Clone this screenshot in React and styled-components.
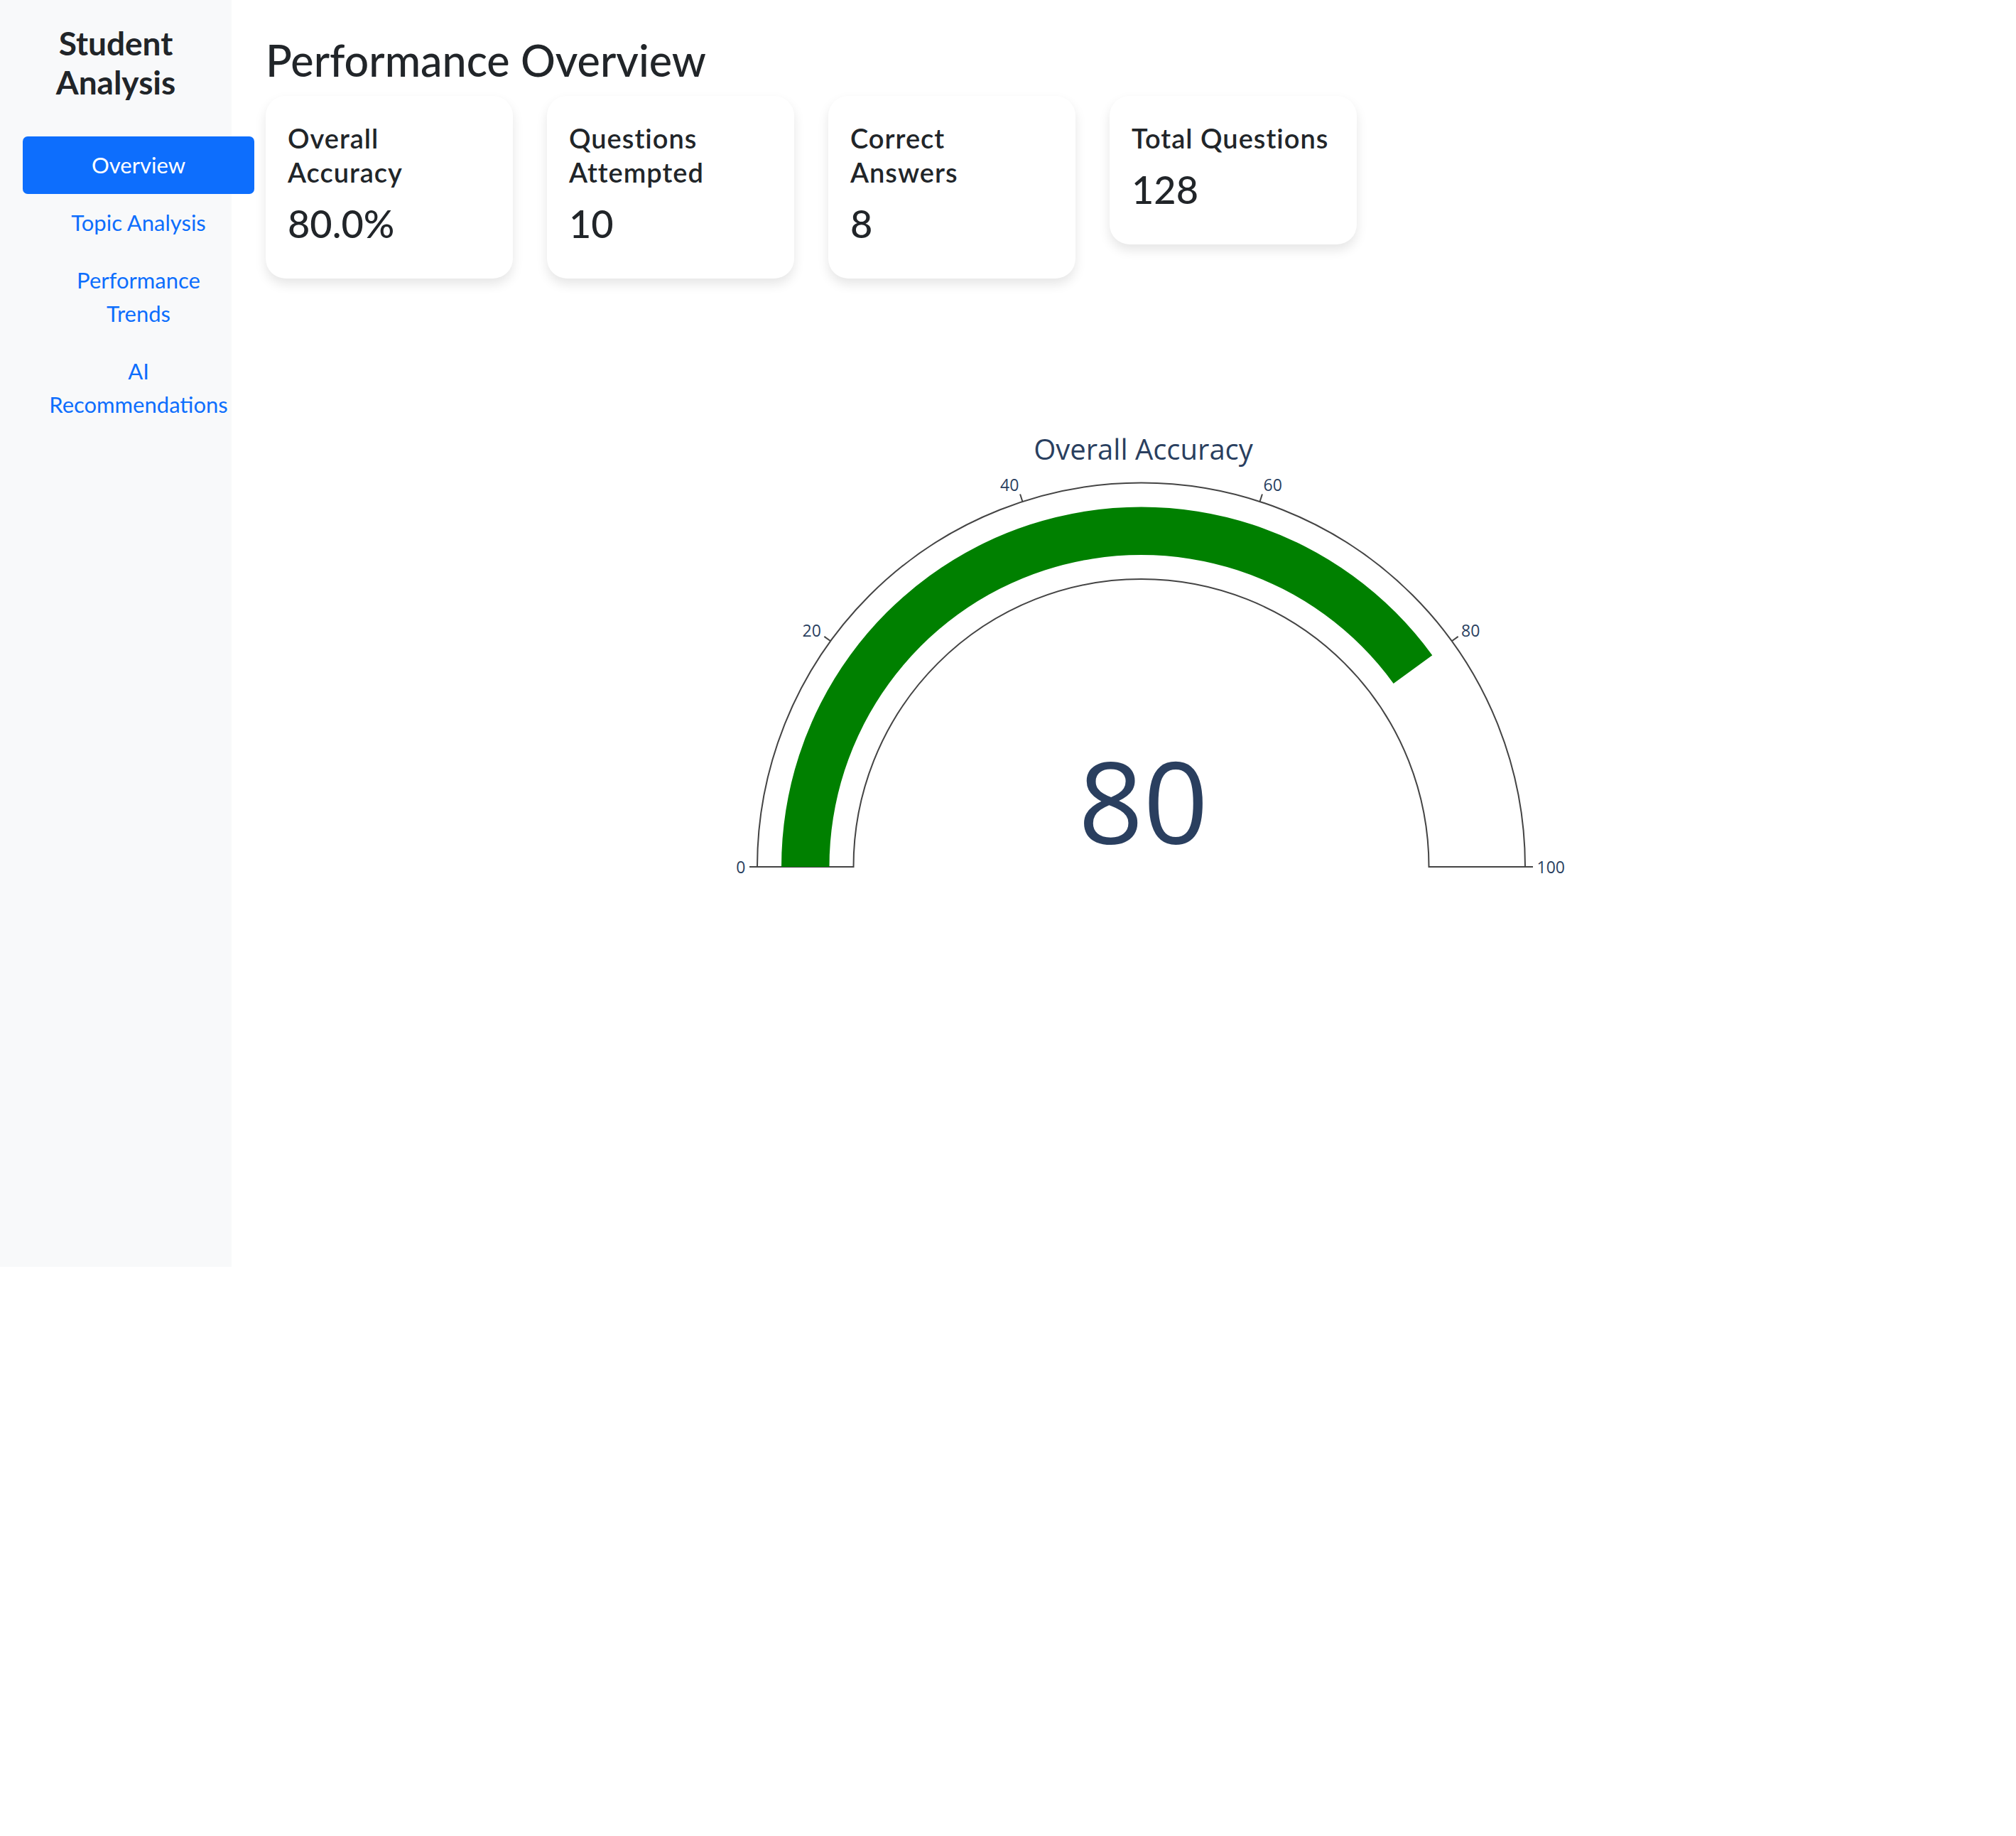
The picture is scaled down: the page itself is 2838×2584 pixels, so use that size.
import React from "react";
import styled, { createGlobalStyle } from "styled-components";

const GlobalStyle = createGlobalStyle`
  *, *::before, *::after { box-sizing: border-box; }
  html, body { margin: 0; padding: 0; background: #ffffff; }
  body {
    font-family: Lato, "Noto Sans", "Liberation Sans", sans-serif;
    color: #212529;
  }
`;

const Layout = styled.div`
  display: flex;
  align-items: flex-start;
  width: 2838px;
`;

const Sidebar = styled.aside`
  flex: 0 0 326px;
  width: 326px;
  height: 1783px;
  background: #f8f9fa;
  padding-top: 33px;
`;

const Brand = styled.h4`
  margin: 0;
  font-size: 46px;
  line-height: 55px;
  font-weight: 700;
  text-align: center;
  color: #212529;
`;

const NavList = styled.ul`
  list-style: none;
  margin: 49px 0 0 32px;
  padding: 0;
  width: 326px;
  display: flex;
  flex-direction: column;
`;

const NavLink = styled.a`
  display: block;
  padding: 17px 31px;
  font-size: 31px;
  line-height: 47px;
  text-align: center;
  border-radius: 7px;
  text-decoration: none;
  color: ${(p) => (p.$active ? "#ffffff" : "#0d6efd")};
  background: ${(p) => (p.$active ? "#0d6efd" : "transparent")};
`;

const Main = styled.main`
  flex: 1;
  padding: 48px 0 0 48px;
`;

const PageTitle = styled.h2`
  margin: 0 0 13px;
  font-size: 61px;
  line-height: 74px;
  font-weight: 500;
  color: #212529;
`;

const CardRow = styled.div`
  display: flex;
  align-items: flex-start;
  gap: 48px;
`;

const Card = styled.div`
  width: 348px;
  background: #ffffff;
  border-radius: 28px;
  padding: 35px 31px 30px;
  box-shadow: 0 8px 16px rgba(0, 0, 0, 0.1);
`;

const CardTitle = styled.h5`
  margin: 0 0 16px;
  font-size: 38px;
  line-height: 48px;
  font-weight: 600;
  letter-spacing: 1px;
  color: #212529;
`;

const CardValue = styled.h3`
  margin: 0 0 15px;
  font-size: 54px;
  line-height: 65px;
  font-weight: 500;
  color: #212529;
`;

const ChartWrap = styled.div`
  margin-top: 8px;
  width: 2464px;
  height: 900px;
`;

const ChartSvg = styled.svg`
  display: block;
  font-family: "Open Sans", "Noto Sans", sans-serif;
`;

const stats = [
  { title: "Overall Accuracy", value: "80.0%" },
  { title: "Questions Attempted", value: "10" },
  { title: "Correct Answers", value: "8" },
  { title: "Total Questions", value: "128" },
];

const navItems = [
  { label: "Overview", active: true },
  { label: "Topic Analysis" },
  { label: "Performance Trends" },
  { label: "AI Recommendations" },
];

function Gauge({ value }) {
  const cx = 1232.5;
  const cy = 820;
  const R = 540.5;
  const rIn = 405;
  const bOut = 506.5;
  const bIn = 439;
  const toRad = (d) => (d * Math.PI) / 180;
  const pt = (r, deg) => [cx + r * Math.cos(toRad(deg)), cy - r * Math.sin(toRad(deg))];

  const endDeg = 180 - value * 1.8;
  const [ox, oy] = pt(bOut, endDeg);
  const [ix, iy] = pt(bIn, endDeg);
  const barPath = `M ${cx - bOut} ${cy} A ${bOut} ${bOut} 0 0 1 ${ox} ${oy} L ${ix} ${iy} A ${bIn} ${bIn} 0 0 0 ${cx - bIn} ${cy} Z`;
  const bgPath = `M ${cx - R} ${cy} A ${R} ${R} 0 0 1 ${cx + R} ${cy} L ${cx + rIn} ${cy} A ${rIn} ${rIn} 0 0 0 ${cx - rIn} ${cy} Z`;

  const ticks = [0, 20, 40, 60, 80, 100].map((v) => {
    const deg = 180 - v * 1.8;
    const [x1, y1] = pt(R, deg);
    const [x2, y2] = pt(R + 11, deg);
    const c = Math.cos(toRad(deg));
    const s = Math.sin(toRad(deg));
    const [ax, ay] = pt(557, deg);
    const anchor = c < -0.05 ? "end" : c > 0.05 ? "start" : "middle";
    const baseline = ay - 8.8 * s + 8.8;
    return { v, x1, y1, x2, y2, ax, baseline, anchor };
  });

  return (
    <ChartSvg width="2464" height="900" viewBox="0 0 2464 900">
      <text x={cx + 3} y={247} textAnchor="middle" fontSize="40" fill="#2a3f5f">
        Overall Accuracy
      </text>
      <path d={bgPath} fill="#ffffff" stroke="#444444" strokeWidth="2" />
      <path d={barPath} fill="#008000" />
      {ticks.map((t) => (
        <g key={t.v}>
          <line x1={t.x1} y1={t.y1} x2={t.x2} y2={t.y2} stroke="#444444" strokeWidth="2" />
          <text x={t.ax} y={t.baseline} textAnchor={t.anchor} fontSize="23" fill="#2a3f5f">
            {t.v}
          </text>
        </g>
      ))}
      <text x={cx + 3} y={787} textAnchor="middle" fontSize="160" fill="#2a3f5f">
        {value}
      </text>
    </ChartSvg>
  );
}

export default function App() {
  return (
    <>
      <GlobalStyle />
      <Layout>
        <Sidebar>
          <Brand>
            Student
            <br />
            Analysis
          </Brand>
          <NavList>
            {navItems.map((n) => (
              <li key={n.label}>
                <NavLink href="#" $active={n.active}>
                  {n.label}
                </NavLink>
              </li>
            ))}
          </NavList>
        </Sidebar>
        <Main>
          <PageTitle>Performance Overview</PageTitle>
          <CardRow>
            {stats.map((s) => (
              <Card key={s.title}>
                <CardTitle>{s.title}</CardTitle>
                <CardValue>{s.value}</CardValue>
              </Card>
            ))}
          </CardRow>
          <ChartWrap>
            <Gauge value={80} />
          </ChartWrap>
        </Main>
      </Layout>
    </>
  );
}
